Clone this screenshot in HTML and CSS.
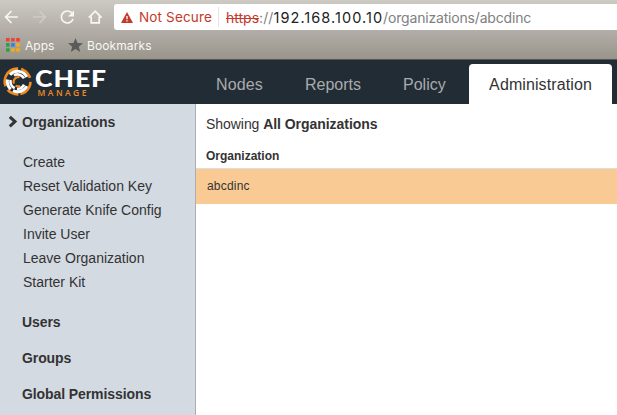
FILE: index.html
```html
<!DOCTYPE html>
<html lang="en">
<head>
<meta charset="utf-8">
<title>Chef Manage</title>
<link rel="stylesheet" href="styles.css">
</head>
<body>
<div class="browser">
  <div class="toolbar">
    <svg class="controls" width="114" height="34" viewBox="0 0 114 34" fill="none" stroke="#f8f7f4" stroke-width="1.7">
      <path d="M17.8 17H6M11.5 11L5.6 17l5.9 6"/>
      <path d="M33 17h12M39.5 11l5.9 6-5.9 6" stroke="#cfccc5"/>
      <path d="M72.3 13.6A6 6 0 1 0 73 19"/>
      <path d="M74 10.5v6h-6z" fill="#f8f7f4" stroke="none"/>
      <path d="M88.8 17.6L95.2 11.2l6.4 6.4M91.2 16.5v6.4h8v-6.4"/>
    </svg>
    <div class="address">
      <svg class="warning" width="12" height="11" viewBox="0 0 12 11"><path d="M6 0l6 11H0z" fill="#c5392a"/><path d="M6 4v3.2M6 8.2v1.3" stroke="#fff" stroke-width="1.3"/></svg>
      <span class="insecure">Not Secure</span>
      <span class="url"><s>https</s><span class="slashes">://</span><b>192.168.100.10</b><span class="path">/organizations/abcdinc</span></span>
    </div>
  </div>
  <div class="bookmarks">
    <svg width="14" height="14" viewBox="0 0 14 14">
      <path d="M0 0h3.6v3.6H0zM5.1 0h3.6v3.6H5.1zM10.2 0h3.6v3.6h-3.6z" fill="#ee4035"/>
      <path d="M0 5.1h3.6v3.6H0zM0 10.2h3.6v3.6H0z" fill="#2ba24c"/>
      <path d="M5.1 5.1h3.6v3.6H5.1z" fill="#2a83ed"/>
      <path d="M10.2 5.1h3.6v3.6h-3.6zM5.1 10.2h3.6v3.6H5.1zM10.2 10.2h3.6v3.6h-3.6z" fill="#f6ab16"/>
    </svg>
    <span class="apps">Apps</span>
    <svg width="15" height="14" viewBox="0 0 15 14"><path d="M7.5 0l2 4.9 5.5.4-4.2 3.4L12.2 14l-4.7-2.9L2.8 14l1.4-5.3L0 5.3l5.5-.4z" fill="#5b5b5a"/></svg>
    <span class="folder">Bookmarks</span>
  </div>
</div>
<header class="header">
  <svg class="logo" width="112" height="44" viewBox="0 60 112 44">
    <g fill="none">
      <circle cx="17.6" cy="81.5" r="12.9" stroke="#f18b21" stroke-width="2.6" stroke-dasharray="15 3 13 4 17 2 12 4 11 4" transform="rotate(205 17.6 81.5)"/>
      <path d="M26.8 77A10.2 10.2 0 0 0 10 74.7M7.5 79.5a10.2 10.2 0 0 0 3.3 9.6M13 90.6a10.2 10.2 0 0 0 13.8-4.5" stroke="#fff" stroke-width="3"/>
      <path d="M24 78.4a7.2 7.2 0 0 0-10-3.1M10.6 80a7.2 7.2 0 0 0 4.1 8.1M17 88.7a7.2 7.2 0 0 0 7-4.1" stroke="#fff" stroke-width="2.6"/>
      <path d="M19.6 77.2a4.9 4.9 0 0 0-5.7 6.5M15.6 85.6a4.9 4.9 0 0 0 4.6.3" stroke="#f18b21" stroke-width="2.2"/>
    </g>
    <text class="brand" x="35" y="87" textLength="72" lengthAdjust="spacingAndGlyphs">CHEF</text>
    <text class="product" x="37.5" y="96" textLength="49">MANAGE</text>
  </svg>
  <nav class="tabs">
    <a class="nodes">Nodes</a><a class="reports">Reports</a><a class="policy">Policy</a><a class="active">Administration</a>
  </nav>
</header>
<div class="body">
  <aside class="sidebar">
    <h2 class="current"><svg width="10" height="14" viewBox="0 0 10 14"><path d="M1.8 1.8L7 6.6l-5.2 4.8" fill="none" stroke="#333" stroke-width="3"/></svg><span>Organizations</span></h2>
    <ul>
      <li>Create</li>
      <li>Reset Validation Key</li>
      <li>Generate Knife Config</li>
      <li>Invite User</li>
      <li>Leave Organization</li>
      <li>Starter Kit</li>
    </ul>
    <h2>Users</h2>
    <h2>Groups</h2>
    <h2>Global Permissions</h2>
  </aside>
  <main class="content">
    <p class="summary">Showing <strong>All Organizations</strong></p>
    <div class="column">Organization</div>
    <div class="row">abcdinc</div>
  </main>
</div>
</body>
</html>
```

FILE: styles.css
```css
* { box-sizing: border-box; }
body {
  margin: 0;
  height: 415px;
  overflow: hidden;
  display: flex;
  flex-direction: column;
  background: #fff;
  color: #333;
  font: 14px "Liberation Sans", Arial, sans-serif;
}
svg { display: block; flex: none; }
.browser {
  height: 60px;
  flex: none;
  background: linear-gradient(#cdcac3, #b3aea8 50%, #99958a);
  border-bottom: 1px solid #55595a;
  font-family: Inter, sans-serif;
}
.toolbar { height: 34px; display: flex; }
.address {
  flex: 1;
  height: 26px;
  margin-top: 4px;
  padding-left: 7px;
  display: flex;
  align-items: center;
  background: #fff;
  border-radius: 3px 0 0 3px;
  white-space: nowrap;
  line-height: 27px;
}
.warning { margin-right: 6px; }
.insecure { width: 80px; color: #c5392a; font-size: 13.5px; letter-spacing: .15px; border-right: 1px solid #e4e4e4; line-height: 20px; }
.url { padding: 1px 0 0 7px; font-size: 14px; }
.url s { color: #c5392a; }
.url b { color: #222; font-weight: 400; font-size: 14.5px; letter-spacing: 1.05px; }
.slashes { letter-spacing: .1px; }
.slashes, .path { color: #808080; }
.path { letter-spacing: -.18px; }
.bookmarks {
  height: 22px;
  padding-left: 6px;
  display: flex;
  align-items: center;
  color: #f8f7f4;
  font-size: 12px;
}
.apps { margin: 0 14px 0 5px; width: 29px; }
.folder { margin-left: 4px; letter-spacing: .1px; }
.header { height: 44px; flex: none; display: flex; background: #222c35; }
.brand { font: 900 23.5px Lato, sans-serif; letter-spacing: .8px; fill: #fff; }
.product { font: 600 8.5px "Open Sans", sans-serif; fill: #f18b21; }
.tabs { display: flex; align-items: flex-end; font-size: 16px; color: #a9abad; }
.tabs a { height: 40px; line-height: 42px; }
.nodes { margin-left: 104px; width: 89px; letter-spacing: .15px; }
.reports { width: 98px; }
.policy { width: 66px; }
.active {
  width: 143px;
  text-align: center;
  background: #fff;
  color: #333;
  letter-spacing: .1px;
  border-radius: 4px 4px 0 0;
}
.body { flex: 1; display: flex; }
.sidebar { width: 196px; flex: none; background: #d3dae2; border-right: 1px solid #aaadb3; }
.sidebar h2 { margin: 0; padding-left: 22px; font-size: 14px; line-height: 36px; letter-spacing: -.09px; }
.sidebar .current { display: flex; align-items: center; gap: 4px; padding-left: 8px; letter-spacing: 0; }
.sidebar ul { margin: 10px 0; padding: 0 0 0 23px; list-style: none; line-height: 24px; }
.content { flex: 1; }
.summary { margin: 0; height: 40px; padding-left: 10px; line-height: 41px; letter-spacing: -.05px; }
.column { height: 25px; padding-left: 10px; font-size: 12px; font-weight: 700; line-height: 24px; border-bottom: 1px solid #ddd; }
.row { height: 35px; padding-left: 11px; background: #f9ca94; font-size: 12px; line-height: 34px; letter-spacing: .2px; }
```
